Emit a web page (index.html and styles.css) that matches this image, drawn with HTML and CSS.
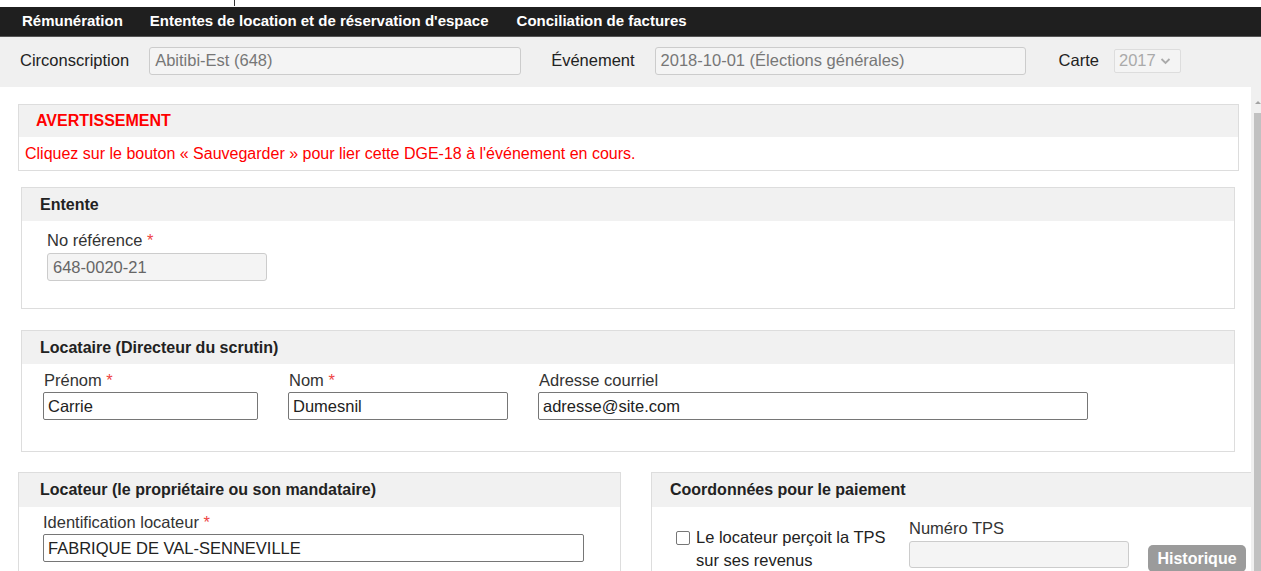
FILE: index.html
```html
<!DOCTYPE html>
<html lang="fr">
<head>
<meta charset="utf-8">
<title>Ententes de location et de réservation d'espace</title>
<link rel="stylesheet" href="styles.css">
</head>
<body>
<div class="topline"><span class="caret"></span></div>
<nav class="mainnav">
  <a class="navlink">Rémunération</a>
  <a class="navlink">Ententes de location et de réservation d'espace</a>
  <a class="navlink">Conciliation de factures</a>
</nav>
<div class="filterbar">
  <span class="flabel">Circonscription</span>
  <div class="ro-field f-circ">Abitibi-Est (648)</div>
  <span class="flabel l-evt">Événement</span>
  <div class="ro-field f-evt">2018-10-01 (Élections générales)</div>
  <span class="flabel l-carte">Carte</span>
  <div class="ro-select">2017
    <svg class="chev" width="11" height="8" viewBox="0 0 11 8"><path d="M1.5 2 L5.5 6 L9.5 2" fill="none" stroke="#aaa" stroke-width="1.8"/></svg>
  </div>
</div>
<div class="workspace">
  <main class="content">
    <section class="box box-warn">
      <div class="box-head warn-head">AVERTISSEMENT</div>
      <div class="warn-body">Cliquez sur le bouton « Sauvegarder » pour lier cette DGE-18 à l'événement en cours.</div>
    </section>

    <section class="box box-wide">
      <div class="box-head">Entente</div>
      <div class="box-body body-entente">
        <div class="field">
          <label class="lbl">No référence <span class="req">*</span></label>
          <div class="ro-field f-ref">648-0020-21</div>
        </div>
      </div>
    </section>

    <section class="box box-wide">
      <div class="box-head">Locataire (Directeur du scrutin)</div>
      <div class="box-body body-locataire">
        <div class="field f-w1">
          <label class="lbl">Prénom <span class="req">*</span></label>
          <div class="in">Carrie</div>
        </div>
        <div class="field f-w2">
          <label class="lbl">Nom <span class="req">*</span></label>
          <div class="in">Dumesnil</div>
        </div>
        <div class="field f-w3">
          <label class="lbl">Adresse courriel</label>
          <div class="in">adresse@site.com</div>
        </div>
      </div>
    </section>

    <div class="split">
      <section class="box box-half">
        <div class="box-head">Locateur (le propriétaire ou son mandataire)</div>
        <div class="box-body body-locateur">
          <div class="field f-w4">
            <label class="lbl">Identification locateur <span class="req">*</span></label>
            <div class="in">FABRIQUE DE VAL-SENNEVILLE</div>
          </div>
        </div>
      </section>
      <section class="box box-pay">
        <div class="box-head">Coordonnées pour le paiement</div>
        <div class="box-body body-pay">
          <div class="tps-check">
            <span class="cb"></span>
            <span class="cb-label">Le locateur perçoit la TPS sur ses revenus</span>
          </div>
          <div class="field tps-field">
            <label class="lbl">Numéro TPS</label>
            <div class="ro-field f-tps"></div>
          </div>
          <button class="btn-hist">Historique</button>
        </div>
      </section>
    </div>
  </main>
  <div class="vscroll">
    <span class="vscroll-arrow"></span>
    <span class="vscroll-thumb"></span>
  </div>
</div>
</body>
</html>
```
FILE: styles.css
```css
* { box-sizing: border-box; }

html, body { margin: 0; padding: 0; }

body {
  font-family: "Liberation Sans", Arial, sans-serif;
  font-size: 16.5px;
  color: #222;
  background: #f0f0f0;
  width: 1261px;
  height: 571px;
  overflow: hidden;
}

/* thin white strip above the menu */
.topline {
  height: 7px;
  background: #fff;
  position: relative;
}
.caret {
  position: absolute;
  left: 234px;
  top: 0;
  width: 1px;
  height: 6px;
  background: #333;
}

/* main menu */
.mainnav {
  height: 30px;
  background: #1f1f1f;
  display: flex;
  align-items: center;
  gap: 27px;
  padding-left: 22px;
  padding-bottom: 2px;
  border-bottom: 1px solid #555;
}
.navlink {
  color: #fff;
  font-weight: bold;
  font-size: 15px;
  text-decoration: none;
}
.navlink:last-child { margin-left: 1px; }

/* context selector bar */
.filterbar {
  height: 50px;
  display: flex;
  align-items: center;
  padding-left: 20px;
  padding-bottom: 3px;
  color: #222;
}
.flabel { font-size: 16.5px; }
.ro-field {
  height: 28px;
  border: 1px solid #ccc;
  border-radius: 3px;
  background: #f4f4f4;
  color: #777;
  font-size: 16.5px;
  padding: 0 5px;
  display: flex;
  align-items: center;
  flex: none;
}
.f-circ { width: 372px; margin-left: 20px; }
.l-evt { margin-left: 30px; }
.f-evt { width: 371px; margin-left: 20px; }
.l-carte { margin-left: 33px; }
.ro-select {
  margin-left: 15px;
  width: 67px;
  height: 24px;
  border: 1px solid #ddd;
  border-radius: 2px;
  background: #f4f4f4;
  color: #aaa;
  font-size: 16.5px;
  padding-left: 4px;
  display: flex;
  align-items: center;
  gap: 4px;
}

/* scrolling work area */
.workspace {
  display: flex;
  height: 484px;
}
.content {
  width: 1251px;
  flex: none;
  background: #fff;
  overflow: hidden;
  padding-top: 17px;
}
.vscroll {
  width: 10px;
  position: relative;
  background: #f0f0f0;
}
.vscroll-arrow {
  position: absolute;
  left: 4px;
  top: 14px;
  width: 0;
  height: 0;
  border-left: 3px solid transparent;
  border-right: 3px solid transparent;
  border-bottom: 3px solid #a3a3a3;
}
.vscroll-thumb {
  position: absolute;
  left: 3px;
  top: 26px;
  width: 7px;
  bottom: 0;
  background: #c1c1c1;
}

/* panels */
.box {
  border: 1px solid #ddd;
  background: #fff;
  flex: none;
}
.box-head {
  background: #f1f1f1;
  font-weight: bold;
  font-size: 16px;
  color: #222;
  padding-left: 18px;
  display: flex;
  align-items: center;
  height: 33px;
}
.box-warn {
  margin-left: 18px;
  width: 1221px;
  height: 67px;
}
.warn-head {
  color: #f00;
  height: 32px;
  padding-left: 17px;
}
.warn-body {
  color: #f00;
  font-size: 16px;
  padding: 8px 0 0 6px;
}
.box-wide {
  margin-left: 21px;
  width: 1214px;
  margin-top: 16px;
}
.box-wide + .box-wide { margin-top: 21px; }
.box-body { display: flex; }

.field { display: flex; flex-direction: column; }
.lbl {
  font-size: 16.5px;
  color: #333;
  line-height: 18px;
}
.req { color: #e44; }

.body-entente {
  height: 87px;
  padding: 10px 0 0 25px;
}
.body-entente .lbl { margin-bottom: 4px; }
.f-ref { width: 220px; height: 28px; color: #666; }

.body-locataire {
  height: 87px;
  padding: 7px 0 0 21px;
}
.body-locataire .lbl { padding-left: 1px; margin-bottom: 3px; }
.in {
  height: 28px;
  border: 1px solid #767676;
  border-radius: 2px;
  background: #fff;
  color: #222;
  font-size: 16.5px;
  padding: 0 4px;
  display: flex;
  align-items: center;
}
.f-w1 { width: 215px; }
.f-w2 { width: 220px; margin-left: 30px; }
.f-w3 { width: 550px; margin-left: 30px; }

.split {
  display: flex;
  gap: 30px;
  margin-top: 20px;
  margin-left: 18px;
}
.box-half { width: 603px; height: 120px; }
.box-pay { width: 620px; height: 120px; }
.box-half .box-head,
.box-pay .box-head { height: 34px; padding-left: 21px; }
.box-pay .box-head { padding-left: 18px; }

.body-locateur { padding: 6px 0 0 24px; }
.body-locateur .lbl { margin-bottom: 3px; }
.f-w4 { width: 541px; }

.body-pay {
  padding: 11px 0 0 24px;
  align-items: flex-start;
}
.tps-check {
  display: flex;
  width: 215px;
  padding-top: 12px;
}
.cb {
  width: 14px;
  height: 14px;
  border: 1px solid #767676;
  border-radius: 2px;
  margin-top: 1px;
  flex: none;
}
.cb-label {
  margin-left: 6px;
  font-size: 16.5px;
  line-height: 23px;
  margin-top: -4px;
  color: #222;
  width: 195px;
}
.tps-field { margin-left: 18px; width: 220px; padding-top: 1px; }
.tps-field .lbl { margin-bottom: 4px; }
.f-tps { height: 27px; }
.btn-hist {
  margin-left: 19px;
  margin-top: 27px;
  width: 98px;
  height: 27px;
  border: none;
  border-radius: 5px;
  background: #9b9b9b;
  color: #fff;
  font-family: "Liberation Sans", Arial, sans-serif;
  font-weight: bold;
  font-size: 16px;
  padding: 0;
  flex: none;
}
```
